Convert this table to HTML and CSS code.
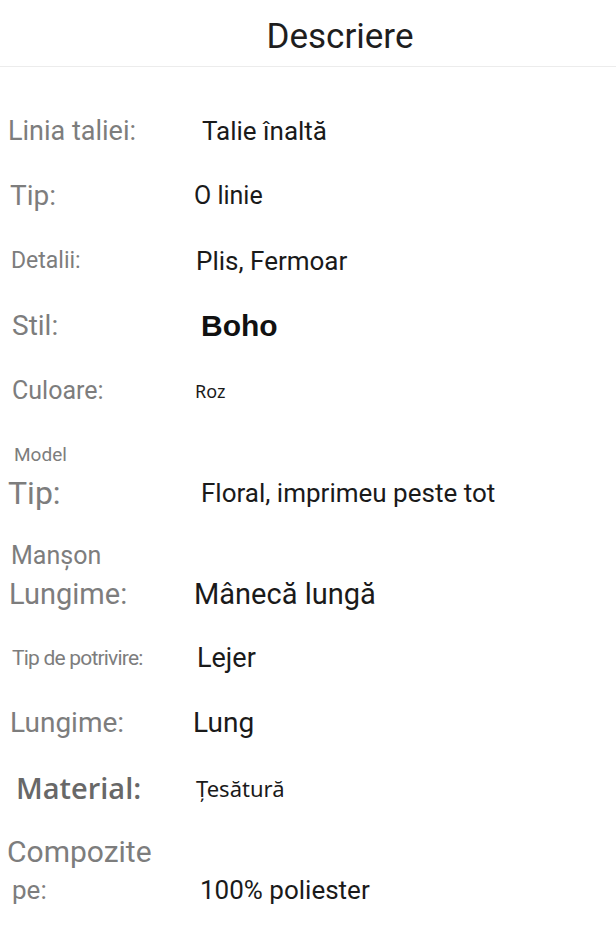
FILE: index.html
```html
<!DOCTYPE html>
<html lang="ro">
<head>
<meta charset="utf-8">
<title>Descriere</title>
<link rel="stylesheet" href="styles.css">
</head>
<body>
<header class="topbar">
  <h1 class="title">Descriere</h1>
</header>
<dl class="specs">
  <div class="row">
    <dt class="label l-linia">Linia taliei:</dt>
    <dd class="value v-talie">Talie înaltă</dd>
  </div>
  <div class="row">
    <dt class="label l-tip">Tip:</dt>
    <dd class="value v-olinie">O linie</dd>
  </div>
  <div class="row">
    <dt class="label l-detalii">Detalii:</dt>
    <dd class="value v-plis">Plis, Fermoar</dd>
  </div>
  <div class="row">
    <dt class="label l-stil">Stil:</dt>
    <dd class="value v-boho">Boho</dd>
  </div>
  <div class="row">
    <dt class="label l-culoare">Culoare:</dt>
    <dd class="value v-roz">Roz</dd>
  </div>
  <div class="row row-two">
    <dt class="label">
      <span class="line l-model">Model</span>
      <span class="line l-tip2">Tip:</span>
    </dt>
    <dd class="value v-floral">Floral, imprimeu peste tot</dd>
  </div>
  <div class="row row-two">
    <dt class="label">
      <span class="line l-manson">Manșon</span>
      <span class="line l-lungime">Lungime:</span>
    </dt>
    <dd class="value v-maneca">Mânecă lungă</dd>
  </div>
  <div class="row">
    <dt class="label l-potrivire">Tip de potrivire:</dt>
    <dd class="value v-lejer">Lejer</dd>
  </div>
  <div class="row">
    <dt class="label l-lungime2">Lungime:</dt>
    <dd class="value v-lung">Lung</dd>
  </div>
  <div class="row">
    <dt class="label l-material">Material:</dt>
    <dd class="value v-tesatura">Țesătură</dd>
  </div>
  <div class="row row-two">
    <dt class="label">
      <span class="line l-compozite">Compozite</span>
      <span class="line l-pe">pe:</span>
    </dt>
    <dd class="value v-poliester">100% poliester</dd>
  </div>
</dl>
</body>
</html>
```
FILE: styles.css
```css
html, body {
  margin: 0;
  padding: 0;
  background: #ffffff;
}

body {
  width: 616px;
  height: 948px;
  overflow: hidden;
  font-family: Roboto, "Liberation Sans", Arial, sans-serif;
}

/* Header */
.topbar {
  height: 67px;
  box-sizing: border-box;
  padding: 12px 0 0 64px;
  border-bottom: 1px solid #ececec;
}

.title {
  margin: 0;
  font-family: Roboto, "Liberation Sans", sans-serif;
  font-weight: 400;
  font-size: 35px;
  line-height: 50px;
  color: #1e1e1e;
  text-align: center;
}

/* Spec list */
.specs {
  display: flex;
  flex-direction: column;
  gap: 25px;
  margin: 44px 0 0;
  padding: 0;
}

.row {
  display: grid;
  grid-template-columns: 193px 1fr;
  align-items: end;
}

.label {
  margin: 0;
  line-height: 40px;
  color: #7d7d7d;
  font-weight: 400;
  white-space: nowrap;
}

.label .line {
  display: block;
  line-height: 38px;
}

.value {
  margin: 0;
  line-height: 40px;
  color: #1a1a1a;
  white-space: nowrap;
}

.row-two .value {
  line-height: 38px;
}

/* Individual label styles */
.l-linia { font-size: 27px; padding-left: 8px; }
.l-tip { font-size: 28px; padding-left: 10px; }
.l-detalii { font-size: 23px; padding-left: 11px; }
.l-stil { font-size: 28px; padding-left: 12px; }
.l-culoare { font-size: 25px; padding-left: 12px; }
.l-model { font-size: 19px; padding-left: 14px; }
.l-tip2 { font-size: 32px; padding-left: 8px; }
.l-manson { font-size: 25px; padding-left: 11px; }
.l-lungime { font-size: 29px; padding-left: 9px; }
.l-potrivire { font-size: 21px; letter-spacing: -0.8px; padding-left: 12px; }
.l-lungime2 { font-size: 28px; padding-left: 10px; }
.l-material {
  font-family: "Open Sans", "Noto Sans", sans-serif;
  font-weight: 600;
  font-size: 29px;
  color: #686868;
  padding-left: 16px;
}
.l-compozite { font-size: 30px; padding-left: 7px; }
.l-pe { font-size: 26px; padding-left: 12px; }

/* Individual value styles */
.v-talie { font-size: 26px; padding-left: 9px; }
.v-olinie { font-size: 25px; padding-left: 1px; }
.v-plis { font-size: 26px; padding-left: 3px; }
.v-boho {
  font-family: "Liberation Sans", Arial, sans-serif;
  font-weight: 700;
  font-size: 30px;
  color: #111111;
  padding-left: 8px;
}
.v-roz {
  font-family: "Noto Sans", "Open Sans", sans-serif;
  font-size: 18px;
  padding-left: 2px;
}
.v-floral { font-size: 26px; padding-left: 8px; }
.v-maneca { font-size: 29px; padding-left: 1px; }
.v-lejer { font-size: 27px; padding-left: 4px; }
.v-lung { font-size: 28px; padding-left: 0; }
.v-tesatura {
  font-family: "Noto Sans", "Open Sans", sans-serif;
  font-size: 22px;
  padding-left: 3px;
}
.v-poliester { font-size: 26px; padding-left: 7px; }
```
